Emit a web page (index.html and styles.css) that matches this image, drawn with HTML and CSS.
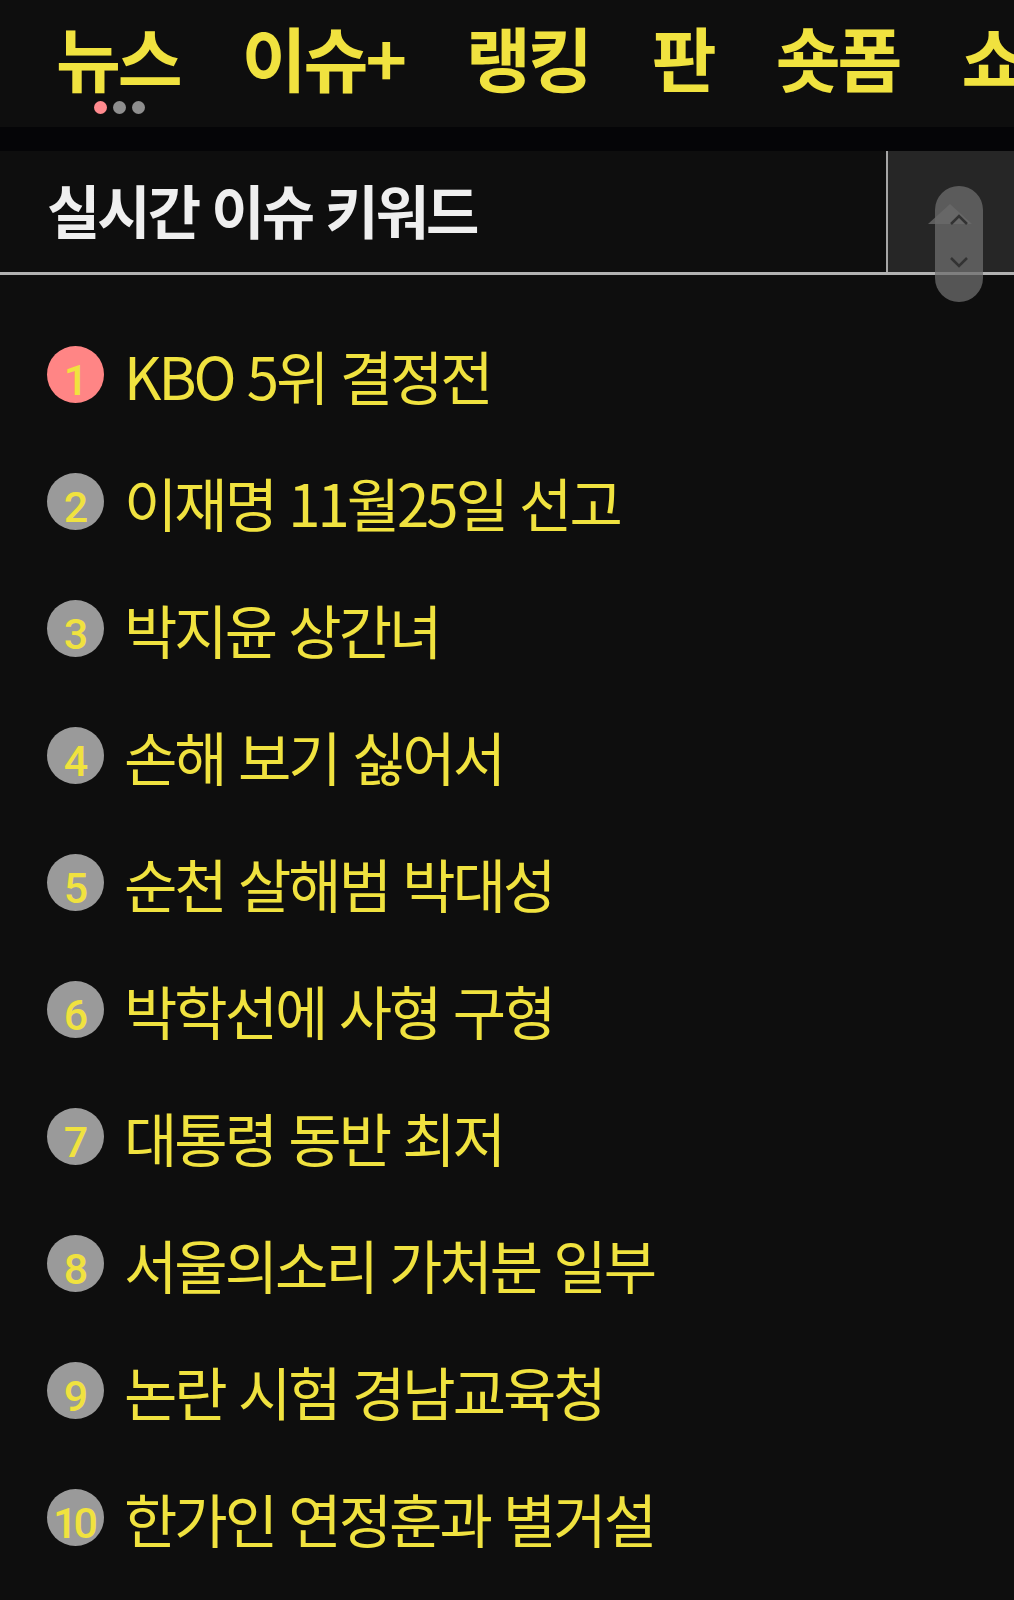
FILE: index.html
```html
<!DOCTYPE html>
<html lang="ko">
<head>
  <meta charset="UTF-8">
  <meta name="viewport" content="width=device-width, initial-scale=1.0">
  <title>실시간 이슈 키워드</title>
  <link rel="stylesheet" href="styles.css">
</head>
<body>
  <nav class="tabs">
    <div class="tab active">뉴스
      <div class="dots"><span class="on"></span><span></span><span></span></div>
    </div>
    <div class="tab">이슈+</div>
    <div class="tab">랭킹</div>
    <div class="tab">판</div>
    <div class="tab">숏폼</div>
    <div class="tab">쇼</div>
  </nav>
  <div class="band"></div>

  <div class="head">
    <h1>실시간 이슈 키워드</h1>
    <div class="side"></div>
    <div class="scroller">
      <svg class="ghost" width="44" height="24" viewBox="0 0 44 24"><path d="M0 22 L22 2 L44 22 Z" fill="#6a6a6a"/></svg>
      <svg class="chev up" width="20" height="12" viewBox="0 0 20 12"><path d="M2 10 L10 2 L18 10" fill="none" stroke="#333" stroke-width="2.5"/></svg>
      <svg class="chev down" width="20" height="12" viewBox="0 0 20 12"><path d="M2 2 L10 10 L18 2" fill="none" stroke="#333" stroke-width="2.5"/></svg>
    </div>
  </div>

  <ol class="keywords">
    <li><span class="num first">1</span>KBO 5위 결정전</li>
    <li><span class="num">2</span>이재명 11월25일 선고</li>
    <li><span class="num">3</span>박지윤 상간녀</li>
    <li><span class="num">4</span>손해 보기 싫어서</li>
    <li><span class="num">5</span>순천 살해범 박대성</li>
    <li><span class="num">6</span>박학선에 사형 구형</li>
    <li><span class="num">7</span>대통령 동반 최저</li>
    <li><span class="num">8</span>서울의소리 가처분 일부</li>
    <li><span class="num">9</span>논란 시험 경남교육청</li>
    <li><span class="num ten">10</span>한가인 연정훈과 별거설</li>
  </ol>
</body>
</html>
```

FILE: styles.css
```css
body {
  margin: 0;
  background: #0e0e0e;
  font-family: "Noto Sans CJK KR", "Noto Sans", sans-serif;
  overflow: hidden;
}
.tabs {
  display: flex;
  height: 127px;
  padding-left: 56px;
  gap: 62px;
  white-space: nowrap;
  overflow: hidden;
}
.tab {
  position: relative;
  color: #f0e23f;
  font-size: 70.5px;
  font-weight: 700;
  line-height: 112px;
  letter-spacing: -3px;
}
.dots {
  position: absolute;
  left: 38px;
  top: 101px;
  display: flex;
  gap: 6px;
}
.dots span {
  width: 13px;
  height: 13px;
  border-radius: 50%;
  background: #8e8e8e;
}
.dots span.on {
  background: #ff8a8e;
}
.band {
  height: 24px;
  background: #050507;
}
.head {
  position: relative;
  display: flex;
  height: 121px;
  border-bottom: 3px solid #b2b2b2;
}
.head h1 {
  flex: 1;
  margin: 0;
  padding: 0 0 4px 47px;
  color: #efefef;
  font-size: 58px;
  font-weight: 700;
  letter-spacing: -3px;
  line-height: 117px;
}
.side {
  width: 126px;
  background: #262626;
  border-left: 2px solid #a6a6a6;
}
.scroller {
  position: absolute;
  right: 31px;
  top: 35px;
  width: 48px;
  height: 116px;
  border-radius: 24px;
  background: rgba(110, 110, 110, 0.75);
}
.scroller .ghost {
  position: absolute;
  left: -7px;
  top: 16px;
  opacity: 0.8;
}
.scroller .chev {
  position: absolute;
  left: 14px;
}
.scroller .up {
  top: 28px;
}
.scroller .down {
  top: 70px;
}
.keywords {
  list-style: none;
  margin: 0;
  padding: 36px 0 0 47px;
}
.keywords li {
  display: flex;
  align-items: center;
  height: 127px;
  color: #f0e23f;
  font-size: 58px;
  letter-spacing: -3px;
  white-space: nowrap;
}
.num {
  flex: none;
  width: 57px;
  height: 57px;
  margin-right: 20px;
  border-radius: 50%;
  background: #9a9a9a;
  color: #f0e23f;
  font-family: "Roboto", sans-serif;
  font-size: 43px;
  font-weight: 500;
  letter-spacing: -1px;
  line-height: 68px;
  text-align: center;
}
.num.first {
  background: #ff8585;
}
.num.ten {
  letter-spacing: -4px;
  text-indent: -4px;
}
```
